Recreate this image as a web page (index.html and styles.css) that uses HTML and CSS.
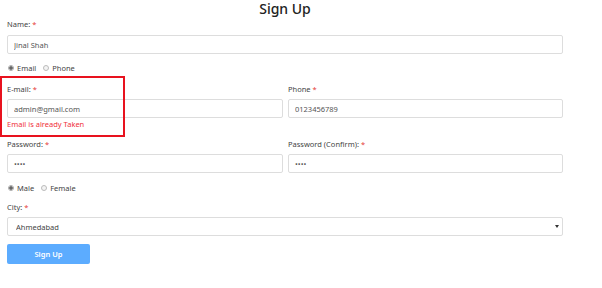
FILE: index.html
```html
<!DOCTYPE html>
<html lang="en">
  <head>
    <meta charset="UTF-8" />
    <meta name="viewport" content="width=device-width, initial-scale=1.0" />
    <title>Sign Up</title>
    <link rel="stylesheet" href="styles.css">
  </head>
  <body>
    <div class="page">
      <h1>Sign Up</h1>

      <label class="lbl first">Name: <span class="req">*</span></label>
      <input class="field" type="text" value="Jinal Shah" />

      <div class="radios">
        <span class="radio on"></span><span class="opt">Email</span>
        <span class="radio"></span><span class="opt">Phone</span>
      </div>

      <div class="cols">
        <div class="col">
          <label class="lbl">E-mail: <span class="req">*</span></label>
          <input class="field" type="text" value="admin@gmail.com" />
          <p class="error">Email is already Taken</p>
          <div class="outline"></div>
        </div>
        <div class="col">
          <label class="lbl">Phone <span class="req">*</span></label>
          <input class="field" type="text" value="0123456789" />
        </div>
      </div>

      <div class="cols">
        <div class="col">
          <label class="lbl">Password: <span class="req">*</span></label>
          <input class="field" type="password" value="1234" />
        </div>
        <div class="col">
          <label class="lbl">Password (Confirm): <span class="req">*</span></label>
          <input class="field" type="password" value="1234" />
        </div>
      </div>

      <div class="radios gender">
        <span class="radio on"></span><span class="opt">Male</span>
        <span class="radio"></span><span class="opt">Female</span>
      </div>

      <label class="lbl city">City: <span class="req">*</span></label>
      <div class="select-wrap">
        <select class="field">
          <option>Ahmedabad</option>
        </select>
      </div>

      <button class="submit">Sign Up</button>
    </div>
  </body>
</html>
```

FILE: styles.css
```css
* {
  margin: 0;
  padding: 0;
  box-sizing: border-box;
}
body {
  background-color: white;
  color: #333;
  font-family: "Noto Sans", "Open Sans", sans-serif;
  font-size: 7.5px;
}
.page {
  width: 556px;
  margin-left: 7px;
  display: flex;
  flex-direction: column;
}
h1 {
  font-size: 14px;
  font-weight: 500;
  line-height: 16px;
  padding-top: 1px;
  text-align: center;
  color: #222;
  margin-left: -7px;
  width: 570px;
}
.lbl {
  display: block;
  line-height: 12px;
  color: #444;
  margin-top: 8px;
}
.lbl.first {
  margin-top: 1px;
}
.req {
  color: #e53935;
}
.field {
  display: block;
  width: 100%;
  height: 19px;
  margin-top: 4px;
  border: 1px solid #ddd;
  border-radius: 2px;
  padding: 0 6px;
  font-family: inherit;
  font-size: 7.5px;
  color: #555;
  background: white;
}
.lbl.first + .field {
  margin-top: 5px;
}
.radios {
  display: flex;
  align-items: center;
  height: 14px;
  margin-top: 7px;
  color: #444;
}
.radios.gender {
  margin-top: 8px;
}
.radio {
  width: 6px;
  height: 6px;
  border: 1px solid #bbb;
  border-radius: 50%;
  margin-left: 1px;
  margin-right: 3px;
  background: #f4f4f4;
}
.radio.on {
  background: radial-gradient(circle, #666 0 1.5px, #f4f4f4 2px);
  border-color: #aaa;
}
.opt {
  margin-right: 6px;
}
.cols {
  display: grid;
  grid-template-columns: 276px 275px;
  column-gap: 5px;
}
.col {
  position: relative;
}
.error {
  color: #f0303a;
  line-height: 12px;
}
.outline {
  position: absolute;
  left: -7px;
  top: 1px;
  width: 125px;
  height: 61px;
  border: 2px solid #e8121e;
}
.lbl.city {
  margin-top: 6px;
}
.select-wrap {
  position: relative;
}
.select-wrap select {
  appearance: none;
  -webkit-appearance: none;
  padding-left: 8px;
  color: #444;
}
.select-wrap::after {
  content: "";
  position: absolute;
  right: 4px;
  top: 12px;
  border-left: 2px solid transparent;
  border-right: 2px solid transparent;
  border-top: 3px solid #333;
}
.submit {
  width: 83px;
  height: 20px;
  margin-top: 8px;
  border: none;
  border-radius: 2px;
  background-color: #5cacff;
  color: white;
  font-family: inherit;
  font-size: 7.5px;
  font-weight: 600;
}
```
